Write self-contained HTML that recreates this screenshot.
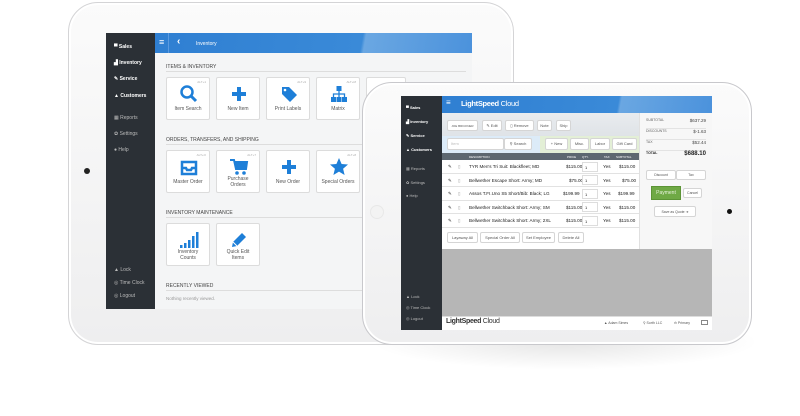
<!DOCTYPE html>
<html><head><meta charset="utf-8"><style>
*{margin:0;padding:0;box-sizing:border-box}
body{width:800px;height:416px;background:#fff;position:relative;overflow:hidden;font-family:"Liberation Sans",sans-serif;color:#333}
.a{position:absolute}
.tab{position:absolute;background:linear-gradient(#fbfbfb,#eeeeef);border:1px solid #d4d4d6;border-radius:30px;box-shadow:inset 0 0 0 2px #fff}
.side{background:#2b3036;color:#fff;font-size:5px}
.side div{position:absolute;white-space:nowrap}
.hdr{background:linear-gradient(100deg,#2f7fd2 0%,#3a8ad8 65%,#6aa7e2 66%,#4b92dc 100%)}
.tile{position:absolute;width:44px;height:43px;background:#fff;border:1px solid #dcdcdc;border-radius:2px;font-size:5px;color:#555;text-align:center}
.tile svg{position:absolute;left:12px;top:6px}
.tile span{position:absolute;left:0;right:0;top:28px;line-height:6px}
.tile i{position:absolute;right:3px;top:2px;font-size:3px;color:#aaa;font-style:normal}
.sec{position:absolute;font-size:5px;color:#444;left:166px}
.line{position:absolute;height:1px;background:#ddd;left:166px}
.btn{position:absolute;background:#fff;border:1px solid #d5d5d5;border-radius:2px;font-size:4px;color:#555;text-align:center;line-height:10px;height:11px}
.row{position:absolute;left:442px;width:197px;height:13.5px;border-bottom:1px solid #e2e2e2;font-size:4.6px;color:#222;background:#fff}
.row div{position:absolute;top:4px;white-space:nowrap}
.q{position:absolute;left:140px;top:1.5px!important;width:16px;height:10px;border:1px solid #ddd;font-size:4px;padding:2px}
.sum{position:absolute;left:646px;width:60px;font-size:3.5px;color:#666;border-bottom:1px solid #e3e3e3;height:11px}
.sum b{position:absolute;right:0;font-weight:normal;font-size:4.5px;color:#444}
</style></head><body>

<!-- back tablet -->
<div class="tab" style="left:68px;top:2px;width:446px;height:343px"></div>
<div class="a" style="left:84px;top:168px;width:6px;height:6px;border-radius:50%;background:#222"></div>
<div class="a side" style="left:106px;top:33px;width:49px;height:276px">
<div style="left:8px;top:11px;font-weight:bold">▀ Sales</div>
<div style="left:8px;top:27px;font-weight:bold">▟ Inventory</div>
<div style="left:8px;top:43px;font-weight:bold">✎ Service</div>
<div style="left:8px;top:60px;font-weight:bold">▲ Customers</div>
<div style="left:8px;top:82px;color:#bbb">▦ Reports</div>
<div style="left:8px;top:98px;color:#bbb">✿ Settings</div>
<div style="left:8px;top:114px;color:#bbb">● Help</div>
<div style="left:8px;top:234px;color:#bbb">▲ Lock</div>
<div style="left:8px;top:247px;color:#bbb">◎ Time Clock</div>
<div style="left:8px;top:260px;color:#bbb">◎ Logout</div>
</div>
<div class="a" style="left:155px;top:33px;width:317px;height:276px;background:#f4f5f6"></div>
<div class="a hdr" style="left:155px;top:33px;width:317px;height:20px"></div>
<div class="a" style="left:159px;top:37px;width:10px;height:12px;color:#fff;font-size:9px">≡</div>
<div class="a" style="left:168px;top:33px;width:1px;height:20px;background:#5a9ae0"></div>
<div class="a" style="left:177px;top:36px;color:#fff;font-size:10px;font-weight:bold">‹</div>
<div class="a" style="left:196px;top:41px;color:#fff;font-size:5px">Inventory</div>

<div class="sec" style="top:64px">ITEMS &amp; INVENTORY</div><div class="line" style="top:71px;width:300px"></div>
<div class="sec" style="top:137px">ORDERS, TRANSFERS, AND SHIPPING</div><div class="line" style="top:144px;width:300px"></div>
<div class="sec" style="top:210px">INVENTORY MAINTENANCE</div><div class="line" style="top:217px;width:300px"></div>
<div class="sec" style="top:283px">RECENTLY VIEWED</div><div class="line" style="top:290px;width:300px"></div>
<div class="sec" style="top:296px;color:#999;font-size:4.5px">Nothing recently viewed.</div>

<div class="tile" style="left:166px;top:77px"><i>ALT+1</i><svg width="20" height="20" viewBox="0 0 20 20"><circle cx="8" cy="8" r="5.5" fill="none" stroke="#1e7fd8" stroke-width="2.5"/><path d="M12 12l5 5" stroke="#1e7fd8" stroke-width="3"/></svg><span>Item Search</span></div>
<div class="tile" style="left:216px;top:77px"><svg width="20" height="20" viewBox="0 0 20 20"><path d="M10 3v14M3 10h14" stroke="#1e7fd8" stroke-width="4"/></svg><span>New Item</span></div>
<div class="tile" style="left:266px;top:77px"><i>ALT+9</i><svg width="20" height="20" viewBox="0 0 20 20"><path d="M3 3h7l8 8-7 7-8-8z" fill="#1e7fd8"/><circle cx="6" cy="6" r="1.3" fill="#fff"/></svg><span>Print Labels</span></div>
<div class="tile" style="left:316px;top:77px"><i>ALT+M</i><svg width="20" height="20" viewBox="0 0 20 20" fill="#1e7fd8"><rect x="7.5" y="2" width="5" height="5"/><rect x="2" y="13" width="5" height="5"/><rect x="7.5" y="13" width="5" height="5"/><rect x="13" y="13" width="5" height="5"/><path d="M10 7v6M4.5 13v-3h11v3" stroke="#1e7fd8" fill="none" stroke-width="1.3"/></svg><span>Matrix</span></div>
<div class="tile" style="left:366px;top:77px;width:40px"></div>

<div class="tile" style="left:166px;top:150px"><i>ALT+O</i><svg width="20" height="20" viewBox="0 0 20 20"><path d="M3 5h14v12H3z M3 11h4l1 2h4l1-2h4" fill="none" stroke="#1e7fd8" stroke-width="2.5"/></svg><span>Master Order</span></div>
<div class="tile" style="left:216px;top:150px"><i>ALT+7</i><svg width="20" height="20" viewBox="0 0 20 20" fill="#1e7fd8"><path d="M1 3h4l2 9h10l1-7H6" fill="none" stroke="#1e7fd8" stroke-width="2"/><rect x="6" y="5" width="11" height="6"/><circle cx="8" cy="16" r="1.8"/><circle cx="15" cy="16" r="1.8"/></svg><span style="top:25px">Purchase<br>Orders</span></div>
<div class="tile" style="left:266px;top:150px"><svg width="20" height="20" viewBox="0 0 20 20"><path d="M10 3v14M3 10h14" stroke="#1e7fd8" stroke-width="4"/></svg><span>New Order</span></div>
<div class="tile" style="left:316px;top:150px"><i>ALT+8</i><svg width="20" height="20" viewBox="0 0 20 20"><path d="M10 1l2.6 6 6.4.5-4.9 4.2 1.5 6.3L10 14.6 4.4 18l1.5-6.3L1 7.5 7.4 7z" fill="#1e7fd8"/></svg><span>Special Orders</span></div>

<div class="tile" style="left:166px;top:223px"><svg width="20" height="20" viewBox="0 0 20 20" fill="#1e7fd8"><rect x="1" y="15" width="2.5" height="3"/><rect x="5" y="13" width="2.5" height="5"/><rect x="9" y="10" width="2.5" height="8"/><rect x="13" y="6" width="2.5" height="12"/><rect x="17" y="2" width="2.5" height="16"/></svg><span style="top:25px">Inventory<br>Counts</span></div>
<div class="tile" style="left:216px;top:223px"><svg width="20" height="20" viewBox="0 0 20 20"><path d="M3 17l1-5 9-9 4 4-9 9z" fill="#1e7fd8"/><path d="M4 12l4 4" stroke="#fff"/></svg><span style="top:25px">Quick Edit<br>Items</span></div>

<!-- soft shadow under front tablet -->
<div class="a" style="left:370px;top:330px;width:390px;height:40px;background:radial-gradient(ellipse at 50% 30%,rgba(0,0,0,.10),rgba(0,0,0,0) 70%)"></div>
<!-- front tablet -->
<div class="tab" style="left:362px;top:82px;width:390px;height:263px;border-color:#c8c8cc"></div>
<div class="a" style="left:370px;top:205px;width:14px;height:14px;border-radius:50%;background:#f3f3f3;border:1px solid #e8e8e8"></div>
<div class="a" style="left:727px;top:209px;width:5px;height:5px;border-radius:50%;background:#111"></div>

<div class="a side" style="left:401px;top:96px;width:41px;height:234px;font-size:4px">
<div style="left:5px;top:9px;font-weight:bold">▀ Sales</div>
<div style="left:5px;top:23px;font-weight:bold">▟ Inventory</div>
<div style="left:5px;top:37px;font-weight:bold">✎ Service</div>
<div style="left:5px;top:51px;font-weight:bold">▲ Customers</div>
<div style="left:5px;top:70px;color:#bbb">▦ Reports</div>
<div style="left:5px;top:84px;color:#bbb">✿ Settings</div>
<div style="left:5px;top:97px;color:#bbb">● Help</div>
<div style="left:5px;top:198px;color:#bbb">▲ Lock</div>
<div style="left:5px;top:209px;color:#bbb">◎ Time Clock</div>
<div style="left:5px;top:220px;color:#bbb">◎ Logout</div>
</div>
<div class="a hdr" style="left:442px;top:96px;width:270px;height:17px"></div>
<div class="a" style="left:446px;top:98px;color:#fff;font-size:8px">≡</div>
<div class="a" style="left:461px;top:99px;color:#fff;font-size:7.5px;letter-spacing:-.3px"><b>LightSpeed</b> Cloud</div>

<div class="a" style="left:442px;top:113px;width:197px;height:23px;background:linear-gradient(#e9ecef,#dfe3e7)"></div>
<div class="btn" style="left:447px;top:120px;width:31px;font-size:3px">JOE BRICKNER</div>
<div class="btn" style="left:482px;top:120px;width:20px">✎ Edit</div>
<div class="btn" style="left:505px;top:120px;width:29px">▯ Remove</div>
<div class="btn" style="left:537px;top:120px;width:15px">Note</div>
<div class="btn" style="left:556px;top:120px;width:15px">Ship</div>
<div class="a" style="left:442px;top:136px;width:98px;height:17px;background:#dcebf8"></div>
<div class="a" style="left:540px;top:136px;width:99px;height:17px;background:#e3efd6"></div>
<div class="btn" style="left:447px;top:138px;width:57px;height:12px;text-align:left;padding-left:3px;color:#bbb">Item</div>
<div class="btn" style="left:504px;top:138px;width:28px;height:12px">⚲ Search</div>
<div class="btn" style="left:545px;top:138px;width:23px;height:12px">+ New</div>
<div class="btn" style="left:570px;top:138px;width:19px;height:12px">Misc.</div>
<div class="btn" style="left:590px;top:138px;width:20px;height:12px">Labor</div>
<div class="btn" style="left:612px;top:138px;width:25px;height:12px">Gift Card</div>
<div class="a" style="left:442px;top:153px;width:197px;height:7px;background:#5d6770;color:#fff;font-size:3px">
<span class="a" style="left:27px;top:2px">DESCRIPTION</span><span class="a" style="left:125px;top:2px">PRICE</span><span class="a" style="left:140px;top:2px">QTY.</span><span class="a" style="left:162px;top:2px">TAX</span><span class="a" style="left:174px;top:2px">SUBTOTAL</span></div>

<div class="row" style="top:160px"><div style="left:6px">✎</div><div style="left:16px;color:#999">▯</div><div style="left:27px">TYR Men's Tri Suit: Blackfleet; MD</div><div style="left:124px">$115.00</div><div class="q">1</div><div style="left:161px">Yes</div><div style="left:177px">$115.00</div></div>
<div class="row" style="top:173.5px"><div style="left:6px">✎</div><div style="left:16px;color:#999">▯</div><div style="left:27px">Bellwether Escape Short: Army; MD</div><div style="left:127px">$75.00</div><div class="q">1</div><div style="left:161px">Yes</div><div style="left:180px">$75.00</div></div>
<div class="row" style="top:187px"><div style="left:6px">✎</div><div style="left:16px;color:#999">▯</div><div style="left:27px">Assos T.FI.Uno S5 Short/Bib: Black; LG</div><div style="left:121px">$199.99</div><div class="q">1</div><div style="left:161px">Yes</div><div style="left:176px">$199.99</div></div>
<div class="row" style="top:200.5px"><div style="left:6px">✎</div><div style="left:16px;color:#999">▯</div><div style="left:27px">Bellwether Switchback Short: Army; SM</div><div style="left:124px">$115.00</div><div class="q">1</div><div style="left:161px">Yes</div><div style="left:177px">$115.00</div></div>
<div class="row" style="top:214px"><div style="left:6px">✎</div><div style="left:16px;color:#999">▯</div><div style="left:27px">Bellwether Switchback Short: Army; 2XL</div><div style="left:124px">$115.00</div><div class="q">1</div><div style="left:161px">Yes</div><div style="left:177px">$115.00</div></div>
<div class="a" style="left:442px;top:227.5px;width:197px;height:21.5px;background:#fff"></div>
<div class="btn" style="left:447px;top:232px;width:31px">Layaway All</div>
<div class="btn" style="left:480px;top:232px;width:40px">Special Order All</div>
<div class="btn" style="left:522px;top:232px;width:33px">Set Employee</div>
<div class="btn" style="left:558px;top:232px;width:26px">Delete All</div>

<div class="a" style="left:639px;top:113px;width:73px;height:136px;background:#f7f7f7;border-left:1px solid #e0e0e0"></div>
<div class="sum" style="top:118px">SUBTOTAL<b>$637.29</b></div>
<div class="sum" style="top:129px">DISCOUNTS<b>$-1.63</b></div>
<div class="sum" style="top:140px">TAX<b>$52.44</b></div>
<div class="sum" style="top:151px;color:#222;border:none;font-weight:bold">TOTAL<b style="font-size:6px;font-weight:bold;color:#222">$688.10</b></div>
<div class="btn" style="left:646px;top:170px;width:30px;height:10px;line-height:9px;font-size:3.5px">Discount</div>
<div class="btn" style="left:676px;top:170px;width:30px;height:10px;line-height:9px;font-size:3.5px">Tax</div>
<div class="a" style="left:651px;top:186px;width:30px;height:14px;background:#6fa945;border:1px solid #5c9436;color:#e8f3dc;font-size:5px;text-align:center;line-height:13px">Payment</div>
<div class="btn" style="left:683px;top:188px;width:19px;height:10px;line-height:9px;font-size:3.5px">Cancel</div>
<div class="btn" style="left:654px;top:206px;width:42px;height:11px;font-size:3.5px">Save as Quote ➔</div>

<div class="a" style="left:442px;top:249px;width:270px;height:67px;background:#b6b6b6"></div>
<div class="a" style="left:442px;top:316px;width:270px;height:14px;background:#fff;border-top:1px solid #ddd"></div>
<div class="a" style="left:446px;top:318px;font-size:7px;color:#333;letter-spacing:-.3px"><b>LightSpeed</b> Cloud</div>
<div class="a" style="left:604px;top:321px;font-size:3.5px;color:#555">▲ Adam Simes</div>
<div class="a" style="left:643px;top:321px;font-size:3.5px;color:#555">⚲ Sorth LLC</div>
<div class="a" style="left:674px;top:321px;font-size:3.5px;color:#555">⊖ Primary</div>
<div class="a" style="left:701px;top:320px;width:7px;height:5px;border:1px solid #888"></div>
</body></html>
